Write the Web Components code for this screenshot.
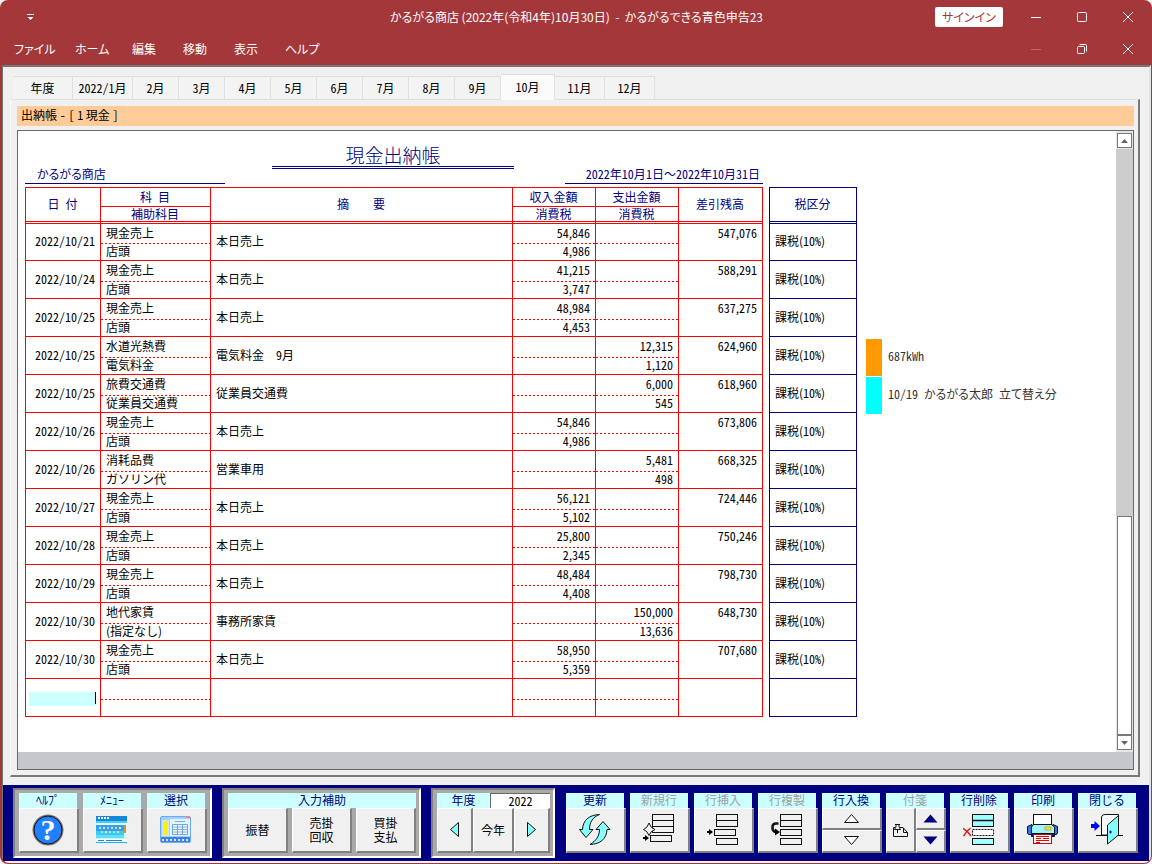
<!DOCTYPE html>
<html lang="ja">
<head>
<meta charset="utf-8">
<title>かるがるできる青色申告23</title>
<style>
  body { margin: 0; background: #f3f3f3; font: 12px/16px "Noto Sans CJK JP", sans-serif; color: #000; }
</style>
</head>
<body>
<app-window></app-window>

<script>
const NAVY = '#000080';
const base = `*{box-sizing:border-box} button,input{font:inherit;color:inherit;margin:0;padding:0;border-radius:0}
  .h{font-feature-settings:"hwid"} svg{display:block}`;

/* Latin letters and digits are set in half-width cells, like a fixed-pitch ledger face. */
const cells = s => s.replace(/[0-9A-Za-z\/%]+/g, m => `<span class="h">${m}</span>`);

function define(name, render) {
  customElements.define(name, class extends HTMLElement {
    constructor() { super(); this.attachShadow({ mode: 'open' }); }
    connectedCallback() { this.shadowRoot.innerHTML = `<style>${base}</style>` + render(this); }
  });
}

/* ---------- title bar and menu ---------- */
const glyph = {
  min: '<path d="M0 5.5H10"/>',
  max: '<rect x=".5" y=".5" width="9" height="9" rx="1"/>',
  restore: '<rect x=".5" y="2.5" width="7" height="7" rx="1"/><path d="M2.5 .5H8.5Q9.5 .5 9.5 1.5V7.5"/>',
  close: '<path d="M0 0L10 10M10 0L0 10"/>'
};
define('window-controls', el => `<style>
  :host{display:flex}
  button{width:46px;height:32px;border:0;background:none;display:grid;place-items:center}
  svg{fill:none;stroke:#fff;stroke-width:1;overflow:visible}
  button:disabled svg{stroke:#d06064}
  </style>` + (el.hasAttribute('inner') ? ['min', 'restore', 'close'] : ['min', 'max', 'close']).map((g, i) =>
  `<button type="button" aria-label="${['最小化', '最大化', '終了'][i]}" ${el.hasAttribute('inner') && !i ? 'disabled' : ''}><svg width="10" height="10" viewBox="0 0 10 10">${glyph[g]}</svg></button>`).join(''));

define('title-bar', () => `<style>
  :host{display:grid;grid-template-columns:1fr auto 1fr;align-items:center;height:33px;color:#fff}
  .q{width:8px;margin-left:24px;border:0;background:none;height:16px;display:grid;place-items:center}
  h1{margin:0;font:inherit;white-space:pre;font-feature-settings:"palt"}
  .r{display:flex;justify-content:flex-end;align-items:center;gap:10px}
  .s{width:68px;height:20px;border:0;border-radius:2px;background:#fff;color:#a4373a;font-feature-settings:"palt"}
  </style>
  <button class="q" type="button" aria-label="クイック アクセス"><svg width="7" height="6" viewBox="0 0 7 6"><path d="M0 0H7V1H0ZM.5 3H6.5L3.5 6Z" fill="#fff"/></svg></button>
  <h1>かるがる商店 (2022年(令和4年)10月30日)  -  かるがるできる青色申告23</h1>
  <div class="r"><button class="s" type="button">サインイン</button><window-controls></window-controls></div>`);

define('menu-bar', () => `<style>
  :host{display:flex;justify-content:space-between;align-items:center;height:32px;color:#fff;padding-left:12px}
  nav{display:grid;grid-template-columns:61px 57px 51px 51px 51px auto;font-feature-settings:"palt"}
  a{color:inherit;text-decoration:none;white-space:nowrap}
  </style><nav>${['ファイル', 'ホーム', '編集', '移動', '表示', 'ヘルプ'].map(t => `<a href="#">${t}</a>`).join('')}</nav>
  <window-controls inner></window-controls>`);

/* ---------- month tabs ---------- */
define('month-tabs', () => {
  const tabs = ['年度', '2022/1月', ...[2, 3, 4, 5, 6, 7, 8, 9, 10, 11, 12].map(n => n + '月')];
  return `<style>
  :host{display:flex;align-items:flex-end;padding:7px 10px 0;position:relative;z-index:1;margin-bottom:-1px}
  button{width:46px;height:24px;border:1px solid #e0e0e0;border-left-width:0;background:#f3f3f3;white-space:nowrap}
  button:first-child{border-left-width:1px}
  .w{width:60px}.n{width:50px}
  .on{width:54px;height:26px;background:#fbfbfb;border-bottom-color:#fbfbfb;padding-bottom:1px}
  </style>` + tabs.map((t, i) =>
    `<button type="button" class="${t === '10月' ? 'on' : i < 2 ? 'w' : i > 10 ? 'n' : ''}">${cells(t)}</button>`).join('');
});

/* ---------- ledger ---------- */
const rows = [
  ['2022/10/21', '現金売上', '店頭', '本日売上', '54,846', '4,986', '', '', '547,076'],
  ['2022/10/24', '現金売上', '店頭', '本日売上', '41,215', '3,747', '', '', '588,291'],
  ['2022/10/25', '現金売上', '店頭', '本日売上', '48,984', '4,453', '', '', '637,275'],
  ['2022/10/25', '水道光熱費', '電気料金', '電気料金　9月', '', '', '12,315', '1,120', '624,960'],
  ['2022/10/25', '旅費交通費', '従業員交通費', '従業員交通費', '', '', '6,000', '545', '618,960'],
  ['2022/10/26', '現金売上', '店頭', '本日売上', '54,846', '4,986', '', '', '673,806'],
  ['2022/10/26', '消耗品費', 'ガソリン代', '営業車用', '', '', '5,481', '498', '668,325'],
  ['2022/10/27', '現金売上', '店頭', '本日売上', '56,121', '5,102', '', '', '724,446'],
  ['2022/10/28', '現金売上', '店頭', '本日売上', '25,800', '2,345', '', '', '750,246'],
  ['2022/10/29', '現金売上', '店頭', '本日売上', '48,484', '4,408', '', '', '798,730'],
  ['2022/10/30', '地代家賃', '(指定なし)', '事務所家賃', '', '', '150,000', '13,636', '648,730'],
  ['2022/10/30', '現金売上', '店頭', '本日売上', '58,950', '5,359', '', '', '707,680']
];
const tableCss = `
  :host{display:block}
  table{border-collapse:separate;border-spacing:0;table-layout:fixed;border-right:1px solid var(--rule);border-bottom:1px solid var(--rule)}
  th,td{padding:0 5px 2px;line-height:14px;border:0 solid var(--rule);border-left-width:1px;border-top-width:1px;white-space:nowrap;overflow:hidden}
  th{font-weight:400;color:${NAVY};padding:0 1px 1px 0}
  td{text-align:left}
  tbody tr:first-child td{border-top:3px double var(--rule)}`;

define('cash-ledger', () => `<style>${tableCss}
  :host{--rule:#f00}
  table{width:738px}
  thead tr:first-child{height:19px} thead tr:last-child{height:15px}
  thead tr:last-child th{line-height:13px}
  .a{height:21px} .b{height:17px} tbody .a:first-child{height:22px}
  td.num,td.date{text-align:right} td.top{vertical-align:top;padding-top:2px}
  td.sub{border-top:0;background:repeating-linear-gradient(90deg,#f00 0 2px,transparent 2px 4px) top left/100% 1px no-repeat}
  .entry{padding:0 0 0 3px}
  .entry div{display:flex;align-items:flex-start;padding-top:2px}
  input{width:66px;height:14px;border:0;background:#cff;outline:0;text-align:right}
  i{width:1px;height:12px;background:#000}
  </style>
  <table><colgroup><col style="width:75px"><col style="width:110px"><col style="width:302px"><col style="width:83px"><col style="width:83px"><col></colgroup>
  <thead>
    <tr><th rowspan="2">日&ensp;付</th><th>科&ensp;目</th><th rowspan="2">摘　　要</th><th>収入金額</th><th>支出金額</th><th rowspan="2">差引残高</th></tr>
    <tr><th>補助科目</th><th>消費税</th><th>消費税</th></tr>
  </thead><tbody>` + rows.map(r => {
    const c = r.map(cells);
    return `<tr class="a"><td class="date" rowspan="2">${c[0]}</td><td>${c[1]}</td><td rowspan="2">${c[3]}</td><td class="num">${c[4]}</td><td class="num">${c[6]}</td><td class="num top" rowspan="2">${c[8]}</td></tr>
    <tr class="b"><td class="sub">${c[2]}</td><td class="num sub">${c[5]}</td><td class="num sub">${c[7]}</td></tr>`;
  }).join('') + `<tr class="a"><td class="entry" rowspan="2"><div><input type="text" aria-label="日付"><i></i></div></td><td></td><td rowspan="2"></td><td></td><td></td><td rowspan="2"></td></tr>
    <tr class="b"><td class="sub"></td><td class="sub"></td><td class="sub"></td></tr></tbody></table>`);

define('tax-column', () => `<style>${tableCss}
  :host{--rule:${NAVY}}
  table{width:88px} thead tr{height:34px} tbody tr{height:38px} tbody tr:first-child{height:39px}
  </style><table><thead><tr><th>税区分</th></tr></thead><tbody>${rows.map(() => `<tr><td>${cells('課税(10%)')}</td></tr>`).join('')}<tr><td></td></tr></tbody></table>`);

define('sticky-note', el => `<style>
  :host{display:flex;align-items:center;gap:6px;height:37px;color:#333;white-space:pre;font-feature-settings:"palt"}
  b{width:16px;height:37px;background:${el.getAttribute('color')}}
  .text{padding-bottom:4px}
  </style><b></b><span class="text">${cells(el.getAttribute('text'))}</span>`);

define('ledger-sheet', () => `<style>
  :host{display:block;background:#fff;padding:12px 7px 0;overflow:hidden}
  header{display:grid;grid-template-columns:200px 242px 1fr;column-gap:47px;width:738px;height:41px;margin-bottom:3px;color:${NAVY};align-items:end}
  h2{margin:0;font-size:19px;line-height:23px;font-weight:300;text-align:center;border-bottom:3px double ${NAVY};align-self:start}
  p{margin:0;line-height:18px;border-bottom:1px solid ${NAVY};white-space:nowrap}
  .shop{padding-left:12px;font-feature-settings:"palt"} .term{text-align:right;padding-right:3px;width:198px;justify-self:end}
  .body{display:flex;align-items:flex-start;gap:6px}
  .notes{display:flex;flex-direction:column;gap:1px;margin:152px 0 0 3px}
  </style>
  <header><p class="shop">かるがる商店</p><h2>現金出納帳</h2><p class="term">${cells('2022年10月1日～2022年10月31日')}</p></header>
  <div class="body"><cash-ledger></cash-ledger><tax-column></tax-column>
  <div class="notes"><sticky-note color="#ff9900" text="687kWh"></sticky-note>
  <sticky-note color="#00ffff" text="10/19&ensp;かるがる太郎&ensp;立て替え分"></sticky-note></div></div>`);

define('scroll-bar', () => `<style>
  :host{display:flex;flex-direction:column;padding:2px 1px;background:#e6e6e6}
  button{flex:none;height:15px;border:1px solid #777;background:#fff;display:grid;place-items:center}
  .t{flex:1;display:flex;flex-direction:column;padding-top:1px}
  .t::before{content:"";flex:368;background:#cdcdcd;margin:0 -1px}
  .t div{flex:218;background:#fff;border:1px solid #777}
  </style>
  <button type="button" aria-label="上へ"><svg width="7" height="4"><path d="M0 4H7L3.5 0Z" fill="#666"/></svg></button>
  <div class="t"><div></div></div>
  <button type="button" aria-label="下へ"><svg width="7" height="4"><path d="M0 0H7L3.5 4Z" fill="#666"/></svg></button>`);

define('ledger-panel', () => `<style>
  :host{display:flex;flex-direction:column;flex:1;margin:0 9px 8px 7px;padding:6px 4px 5px 6px;border:solid;border-width:1px 2px 2px 1px;border-color:#e0e0e0 #7a7a7a #7a7a7a #fff}
  .cap{background:#fc9;height:20px;line-height:18px;padding-left:4px;margin-bottom:4px;white-space:pre}
  .doc{flex:1;display:grid;grid-template:1fr 17px/minmax(0,1fr) 17px;border:1px solid #696969;background:#c6c7cb}
  </style>
  <div class="cap">${'出納帳 - [ 1 現金 ]'.replace(/[-\[\]1]/g, m => `<span class="h">${m}</span>`)}</div>
  <div class="doc"><ledger-sheet></ledger-sheet><scroll-bar></scroll-bar></div>`);

/* ---------- toolbar ---------- */
const row = (x, y, h, f) => `<rect x="${x}.5" y="${y}.5" width="21" height="${h}" fill="${f || '#f0f0f0'}"/>`;
const arrow = y => `<path d="M0 ${y - 1}H2V${y - 3}L6 ${y}L2 ${y + 3}V${y + 1}H0Z" fill="#000" stroke="none"/>`;
const dots = (y, xs, cs) => xs.map((x, i) => `<rect x="${x}" y="${y}" width="2" height="2" fill="${cs[i % cs.length]}"/>`).join('');
const icons = {
  help: `<circle cx="16" cy="16" r="15.5" fill="#777" stroke="none"/><circle cx="16" cy="16" r="14" fill="#2080ff" stroke="#111"/><text x="16" y="26" text-anchor="middle" font-family="Liberation Serif,serif" font-weight="700" font-size="30" fill="#fff" stroke="none">?</text>`,
  menu: `<g stroke="none"><rect y="2" width="31" height="27" fill="#bff4ff"/><rect y="2" width="31" height="5" fill="#1688d8"/><rect y="7" width="31" height="2" fill="#40d0f8"/>
    ${dots(3, [2, 5, 8, 11], ['#fff'])}<rect x="1" y="9" width="27" height="3" fill="#e8fcff"/><rect y="11" width="28" height="9" fill="#2ba4ee"/><rect y="17" width="28" height="4" fill="#35cdf5"/>
    ${dots(13, [3, 7, 11, 15, 19, 23], ['#ffd080', '#d8e0ff', '#f8b0d0', '#b8f0a0'])}${dots(17, [5, 9, 13, 17, 21], ['#c8d0ff', '#ffe080', '#f8c0c8'])}
    <rect x="28" y="9" width="3" height="15" fill="#d8f8ff"/><rect x="28" y="11" width="2" height="8" fill="#f08820"/><rect y="21" width="28" height="3" fill="#60e0fa"/><rect y="25" width="31" height="3" fill="#fff"/><rect x="2" y="26" width="6" height="1" fill="#1688d8"/><rect x="10" y="26" width="16" height="1" fill="#1688d8"/><rect y="28" width="31" height="1" fill="#20b0e8"/></g>`,
  select: `<rect x=".5" y="2.5" width="30" height="26" rx="1.5" fill="#9fd0ff" stroke="#68aaf5"/><g stroke="none"><rect x="26" y="2" width="4" height="2" fill="#f08098"/><rect x="2" y="6" width="7" height="16" fill="#cde8ff"/><rect x="3" y="7" width="5" height="14" fill="#ffee10"/><rect x="10" y="5" width="20" height="17" fill="#e4f3ff"/><rect x="1" y="23" width="29" height="5" fill="#4080e0"/></g>
    ${dots(25, [2, 6, 10, 14, 18, 22, 26], ['#cfe6ff']).replace(/<rect/g, '<rect stroke="none"')}<path d="M15 7.5H25" stroke="#68aaf5"/><path d="M12.5 10.5H27.5V20.5H12.5ZM12.5 13H27.5M12.5 15.5H27.5M12.5 18H27.5M17.5 10.5V20.5M22.5 10.5V20.5" fill="#fff" stroke="#6aa8e8"/>`,
  refresh: `<g fill="#8ff" stroke="#111"><path d="M20.5 .5C10 1 4 6 3.5 15.5H.5L7 23.5L14 15.5H10.5C10.5 8 14 3 20.5 .5Z"/><path d="M11 30.5C21.5 30 27.5 25 28 15.5H31L24 7.5L17 15.5H20.5C20.5 22 17 27 11 30.5Z"/></g>`,
  newrow: row(9, 0, 18) + '<path d="M9 6.5H31M9 12.5H31"/>' + row(7, 21, 6) + `<path d="M6 9Q7.5 14 12 15.5Q7.5 17 6 21.5Q4.5 17 .5 15.5Q4.5 14 6 9Z" fill="#f0f0f0"/>` + arrow(24),
  insert: row(9, 0, 12) + '<path d="M9 6.5H31"/>' + row(7, 15, 6) + row(9, 24, 6) + arrow(18),
  copy: row(9, 0, 12) + '<path d="M9 6.5H31"/>' + row(9, 15, 6) + row(9, 24, 6) + `<path d="M7.5 9.5H5Q1.5 9.5 1.5 13V14Q1.5 17.5 5 18" fill="none" stroke-width="2.5"/><path d="M4 14.5L9 18L4 21.5Z" fill="#000" stroke="none"/>`,
  delrow: row(9, 0, 12, '#a0ffff') + '<path d="M9 6.5H31" stroke-width="1.5"/><rect x="9.5" y="15.5" width="21" height="6" fill="#fff" stroke-dasharray="2 1"/>' + row(9, 24, 6, '#a0ffff') + `<path d="M0 14.5Q4 16.5 8 22M7.5 14Q3.5 17 .5 22" stroke="#e01818" stroke-width="1.5" fill="none"/>`,
  print: `<path d="M.5 12.5L5 10.5V20.5H1.5L.5 19Z" fill="#2878f0"/><path d="M30.5 12.5L26 10.5V20.5H29.5L30.5 19Z" fill="#2878f0"/><path d="M4.5 19.5H27.5V22.5H4.5Z" fill="#0000c0"/><path d="M4.5 19.5V13L6.5 10.5H24.5L27.5 13V19.5Z" fill="#a0f4ff"/><rect x="6.5" y=".5" width="18" height="10" fill="#fff"/><rect x="18" y="13" width="6" height="3" fill="#ffe020" stroke="#998800" stroke-width=".5"/><rect x="6.5" y="20.5" width="18" height="9" fill="#fff" stroke="#c00"/><path d="M9 22.5H22M9 24.5H14M16 24.5H22M9 26.5H22M9 28.5H13" stroke="#e00"/>`,
  exit: `<path d="M0 10H3.5V7L9 12L3.5 17V14H0Z" fill="#00f" stroke="none"/><path d="M5 21.5H32"/><path d="M10.5 21V3Q11 .5 14 .5H27.5V21Z" fill="#fff"/><path d="M16.5 11L27.5 1.5V21L16.5 30Z" fill="#8ff"/><path d="M18 18H21M19.5 16.5V19.5" stroke="#00f"/>`,
  sticker: `<path d="M.5 3.5V12.5H14.5V8.5L10 3.5H7" fill="#f0f0f0"/><path d="M.5 3.5H2M10.5 4V8.5H14.5"/><path d="M2 .5H7M3 .5V3L1.5 5.5H7.5L6 3V.5M4.5 5.5V9" fill="#fff"/>`
};
const svg = (n, w = 32, h = 32) => `<svg width="${w}" height="${h}" viewBox="0 0 ${w} ${h}" stroke="#111" fill="none" aria-hidden="true">${icons[n]}</svg>`;
const tri = (d, fill, stroke = 'none', w = 15, h = 9) => `<svg width="${w}" height="${h}" viewBox="0 0 ${w} ${h}" fill="${fill}" stroke="${stroke}" aria-hidden="true"><path d="${d}"/></svg>`;
const keyCss = `button{background:#f0f0f0;border:1px solid #fff;border-right:2px solid #808080;border-bottom:2px solid #808080;display:grid;place-content:center;justify-items:center;line-height:12px;white-space:nowrap}
  .cap{background:#cff;color:${NAVY};height:15px;line-height:14px;text-align:center;white-space:nowrap;display:block}
  .cap.off{color:#a0a0a0}`;

define('tool-key', el => {
  const off = el.hasAttribute('off'), kind = el.getAttribute('icon');
  const up = 'M.5 8.5L7.5 .5L14.5 8.5Z', dn = 'M.5 .5L7.5 8.5L14.5 .5Z', d = off ? ' disabled' : '';
  const label = el.getAttribute('label');
  const pair = (f, s) => `<div class="pair"><button type="button" aria-label="${label} 上"${d}>${tri(up, f, s)}</button><button type="button" aria-label="${label} 下"${d}>${tri(dn, f, s, 15, 10)}</button></div>`;
  const body = kind === 'swap' ? pair('#fff', '#111')
    : kind === 'sticker' ? `<div class="split"><button type="button" aria-labelledby="c"${d}>${svg('sticker', 15, 13)}</button>${pair(NAVY, 'none')}</div>`
    : `<button class="lone" type="button" aria-labelledby="c"${d}>${svg(kind)}</button>`;
  return `<style>:host{display:grid;grid-template-rows:15px 45px;width:60px}${keyCss}
    .cap{margin-right:2px}
    .lone{padding-right:1px}
    .pair{display:grid;grid-template-rows:22px 23px}
    .split{display:grid;grid-template-columns:30px 30px}
    </style><span id="c" class="cap${off ? ' off' : ''}">${label}</span>${body}`;
});

define('tool-group', () => `<style>
  :host{display:flex;gap:4px;height:70px;padding:3px 3px 0 4px;background:#a9a9a9;border:2px solid;border-color:#808080 #fff #fff #808080}
  </style><slot></slot>`);

define('entry-helper', () => `<style>:host{display:grid;grid-template-rows:15px 45px}${keyCss}
  div{display:grid;grid-template-columns:repeat(3,60px);gap:4px}
  button{line-height:14px}</style>
  <span class="cap">入力補助</span><div><button type="button">振替</button><button type="button"><span>売掛</span><span>回収</span></button><button type="button"><span>買掛</span><span>支払</span></button></div>`);

define('year-picker', () => `<style>:host{display:grid;grid-template:15px 45px/113px}${keyCss}
  .y{display:grid;grid-template-columns:53px 60px}
  input{width:100%;height:15px;border:1px solid #696969;border-width:1px 0 0 1px;background:#fff;text-align:center;font-feature-settings:"hwid"}
  .k{display:grid;grid-template-columns:36px 41px 36px}
  </style>
  <div class="y"><label class="cap" for="y">年度</label><input id="y" type="text" value="2022"></div>
  <div class="k"><button type="button" aria-label="前年">${tri('M8.5 .5V14.5L.5 7.5Z', '#8ff', '#111', 9, 16)}</button><button type="button">今年</button><button type="button" aria-label="翌年">${tri('M.5 .5V14.5L8.5 7.5Z', '#8ff', '#111', 9, 16)}</button></div>`);

define('tool-bar', () => `<style>
  :host{display:flex;gap:10px;height:76px;padding:3px 0 0 10px;background:${NAVY}}
  .row{display:flex;gap:4px;padding:5px 0 0 1px}
  </style>
  <tool-group><tool-key label="ﾍﾙﾌﾟ" icon="help"></tool-key><tool-key label="ﾒﾆｭｰ" icon="menu"></tool-key><tool-key label="選択" icon="select"></tool-key></tool-group>
  <tool-group><entry-helper></entry-helper></tool-group>
  <tool-group><year-picker></year-picker></tool-group>
  <div class="row">
  <tool-key label="更新" icon="refresh"></tool-key><tool-key label="新規行" icon="newrow" off></tool-key><tool-key label="行挿入" icon="insert" off></tool-key>
  <tool-key label="行複製" icon="copy" off></tool-key><tool-key label="行入換" icon="swap"></tool-key><tool-key label="付箋" icon="sticker" off></tool-key>
  <tool-key label="行削除" icon="delrow"></tool-key><tool-key label="印刷" icon="print"></tool-key><tool-key label="閉じる" icon="exit"></tool-key></div>`);

define('app-window', () => `<style>
  :host{display:flex;flex-direction:column;min-height:100vh;background:#a4373a;border-radius:8px;overflow:hidden;box-sizing:border-box;padding:0 1px 1px 2px}
  main{flex:1;display:flex;flex-direction:column;background:#f0f0f0;border:solid;border-width:2px 2px 2px 1px;border-color:#757575 #e3e3e3 #f3f3f3 #757575;border-radius:0 0 7px 7px}
  </style><title-bar></title-bar><menu-bar></menu-bar>
  <main><month-tabs></month-tabs><ledger-panel></ledger-panel><tool-bar></tool-bar></main>`);
</script>
</body>
</html>
